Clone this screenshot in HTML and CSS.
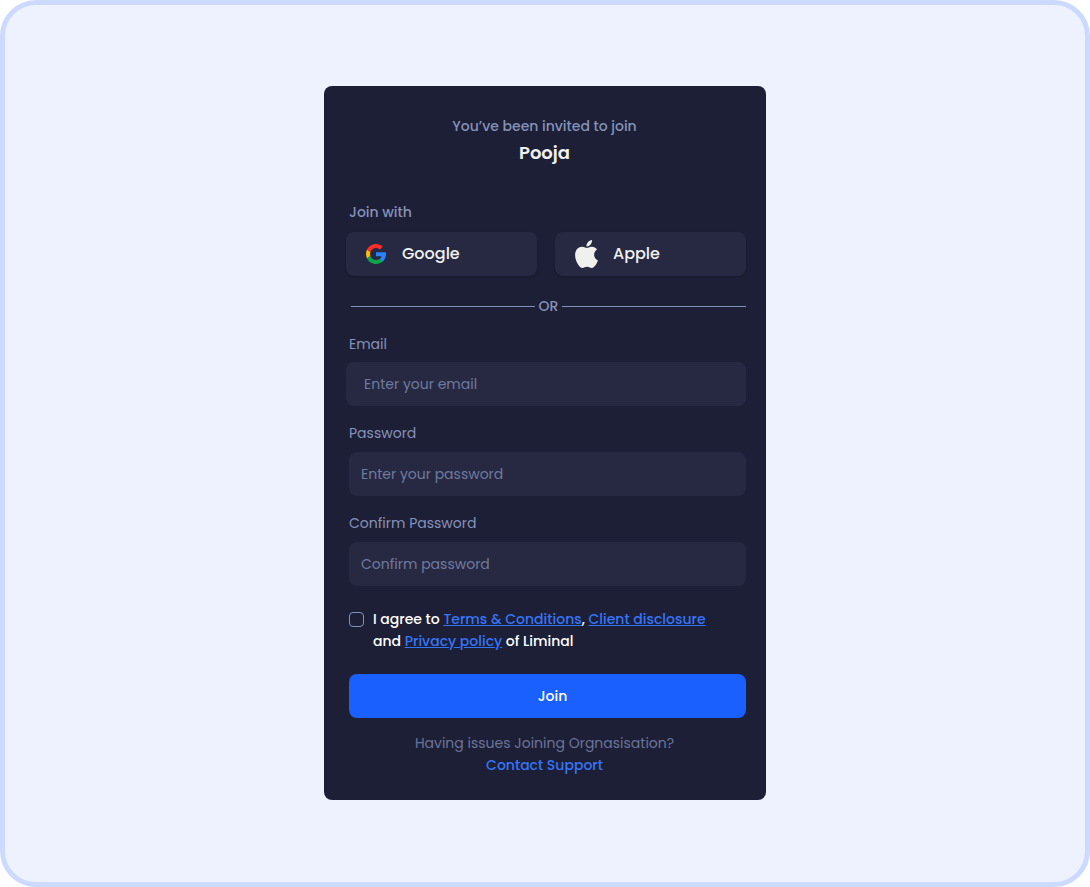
FILE: index.html
```
<!DOCTYPE html>
<html lang="en">
  <head>
    <meta charset="UTF-8" />
    <meta name="viewport" content="width=device-width, initial-scale=1.0" />
    <title>Join Pooja</title>
    <link rel="stylesheet" href="styles.css">
  </head>
  <body>
    <main class="page">
      <form class="card">
        <header class="invite">
          <p>You’ve been invited to join</p>
          <h1>Pooja</h1>
        </header>

        <p class="join-label">Join with</p>
        <div class="providers">
          <button type="button" class="provider google">
            <svg width="20" height="20" viewBox="0 0 48 48" aria-hidden="true">
              <path fill="#fbbb00" d="M10.5 28.6A14.5 14.5 0 0 1 9.700 24c0-1.600.3-3.100.8-4.600l-8-6.200A24 24 0 0 0 0 24c0 3.900.9 7.500 2.500 10.800z" />
              <path fill="#ff2e2b" d="M24 9.500c3.500 0 6.700 1.200 9.200 3.600l6.900-6.900C35.900 2.400 30.500 0 24 0 14.600 0 6.500 5.400 2.500 13.200l8 6.200C12.400 13.700 17.700 9.500 24 9.500z" />
              <path fill="#2b83fa" d="M47.500 19.800H24v9.400h13c-.6 3-2.300 5.500-4.800 7.200l7.700 6C44.500 38.200 48 32 48 24c0-1.500-.2-2.900-.5-4.200z" />
              <path fill="#0ea54a" d="M24 48c6.500 0 11.900-2.100 15.900-5.800l-7.700-6c-2.200 1.500-4.900 2.300-8.200 2.300-6.300 0-11.600-4.200-13.500-9.900l-8 6.200C6.500 42.600 14.600 48 24 48z" />
            </svg>
            Google
          </button>
          <button type="button" class="provider apple">
            <svg width="23" height="28" viewBox="0 0 814 1000" aria-hidden="true">
              <path fill="#f0f0ee" d="M788 341c-6 4-108 62-108 190 0 148 130 200 134 202-1 3-21 72-69 142-42 61-87 123-155 123s-85-40-163-40c-76 0-103 41-165 41s-105-57-155-127C49 790 0 663 0 542c0-194 126-297 251-297 66 0 121 43 163 43 40 0 102-46 177-46 28 0 130 3 197 99zM554 159c31-37 53-88 53-139 0-7-1-14-2-20-51 2-111 34-147 76-28 32-55 83-55 135 0 8 1 16 2 18 3 1 8 1 14 1 45 0 102-30 135-71z" />
            </svg>
            Apple
          </button>
        </div>

        <div class="divider">OR</div>

        <div class="field field-wide">
          <label for="email">Email</label>
          <input type="email" id="email" placeholder="Enter your email" />
        </div>
        <div class="field">
          <label for="password">Password</label>
          <input type="password" id="password" placeholder="Enter your password" />
        </div>
        <div class="field">
          <label for="confirm">Confirm Password</label>
          <input type="password" id="confirm" placeholder="Confirm password" />
        </div>

        <div class="terms">
          <input type="checkbox" id="agree" />
          <label for="agree">
            I agree to <a href="#">Terms &amp; Conditions</a>, <a href="#">Client disclosure</a><br />
            and <a href="#">Privacy policy</a> of Liminal
          </label>
        </div>

        <button type="submit" class="join">Join</button>

        <footer class="help">
          <p>Having issues Joining Orgnasisation?</p>
          <a href="#">Contact Support</a>
        </footer>
      </form>
    </main>
  </body>
</html>
```
FILE: styles.css
```
* {
  margin: 0;
  padding: 0;
  box-sizing: border-box;
}
body {
  background: #fff;
  font-family: Poppins, Inter, sans-serif;
  font-size: 14px;
  line-height: 20px;
  color: #8592b8;
}
button,
input {
  font: inherit;
  border: none;
}
a {
  color: #3575f8;
}
.page {
  min-height: 100vh;
  padding-bottom: 1px;
  display: flex;
  justify-content: center;
  align-items: center;
  background: #eef2ff;
  border: 5px solid #cddaff;
  border-radius: 36px;
}
.card {
  width: 100%;
  max-width: 442px;
  padding: 30px 20px 24px 22px;
  background: #1d1f36;
  border-radius: 8px;
}
.invite,
.help {
  padding-right: 3px;
  text-align: center;
}
.invite {
  font-weight: 500;
  margin-bottom: 36px;
}
.invite h1 {
  margin-top: 4px;
  font-size: 18px;
  line-height: 26px;
  font-weight: 600;
  color: #f0f0ee;
}
.join-label {
  margin: 0 0 10px 3px;
  font-weight: 500;
}
.providers {
  display: grid;
  grid-template-columns: 1fr 1fr;
  gap: 18px;
}
.provider {
  height: 44px;
  display: flex;
  align-items: center;
  gap: 16px;
  padding: 0 20px;
  font-size: 16px;
  font-weight: 500;
  color: #f0f0ee;
  background: #272942;
  border-radius: 8px;
  box-shadow: 0 1px 2px rgba(0, 0, 0, 0.25);
}
.apple {
  gap: 15px;
}
.divider {
  display: flex;
  align-items: center;
  gap: 4px;
  margin: 20px 0 18px 5px;
  font-weight: 500;
}
.divider::before,
.divider::after {
  content: "";
  flex: 1;
  height: 1px;
  background: #8592b8;
}
.field {
  display: flex;
  flex-direction: column;
  gap: 9px;
  margin: 0 0 17px 3px;
}
.field input {
  width: 100%;
  height: 44px;
  padding: 0 12px;
  color: #f0f0ee;
  background: #272942;
  border-radius: 8px;
}
.field input::placeholder {
  color: #6f7a9f;
  opacity: 1;
}
.field-wide {
  gap: 8px;
  margin-left: 0;
}
.field-wide label {
  padding-left: 3px;
}
.field-wide input {
  padding: 0 18px;
}
.terms {
  display: flex;
  align-items: flex-start;
  gap: 9px;
  margin: 22px 0 22px 3px;
  line-height: 22px;
  font-weight: 500;
  color: #fff;
}
.terms input {
  appearance: none;
  flex: none;
  width: 15px;
  height: 15px;
  margin-top: 4px;
  border: 1px solid #8592b8;
  border-radius: 4px;
}
.terms input:checked {
  background: #1a5fff;
}
.join {
  display: block;
  width: calc(100% - 3px);
  height: 44px;
  margin-left: 3px;
  padding-left: 10px;
  font-weight: 500;
  color: #fff;
  background: #1a5fff;
  border-radius: 8px;
}
.help {
  margin-top: 14px;
  line-height: 22px;
  color: #6b7499;
}
.help a {
  font-weight: 500;
  text-decoration: none;
}
```
